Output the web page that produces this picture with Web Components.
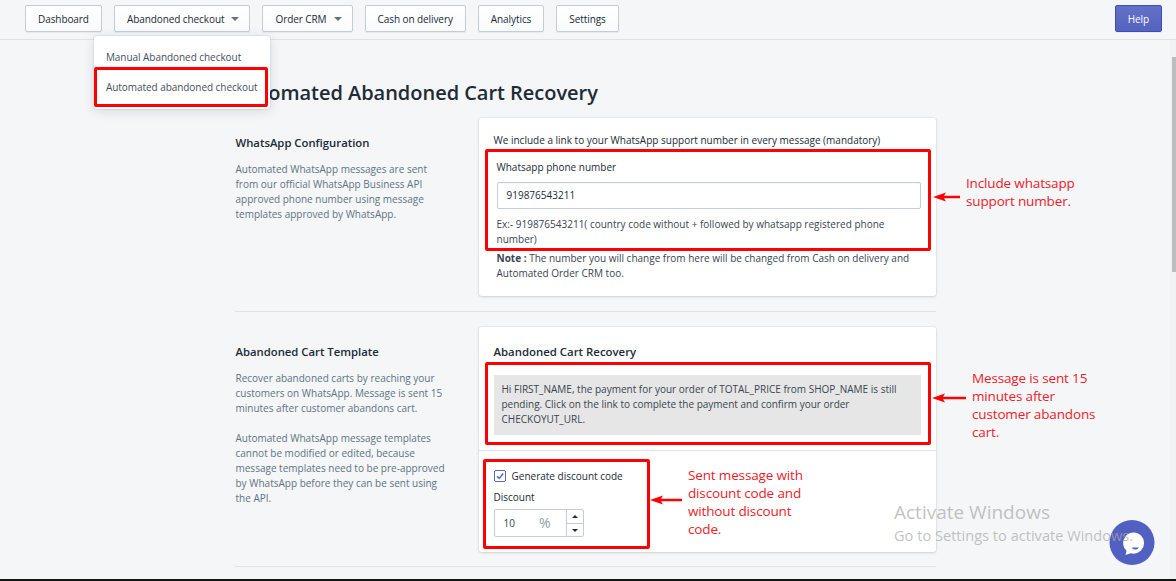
<!DOCTYPE html>
<html>
<head>
<meta charset="utf-8">
<title>Automated Abandoned Cart Recovery</title>
<style>
  html, body { margin: 0; padding: 0; height: 100%; overflow: hidden; }
  body { font-family: "Open Sans", "Noto Sans", sans-serif; font-size: 10px; letter-spacing: 0; color: #212b36; background: #f4f6f8; }
</style>
</head>
<body>
<app-page>
  <top-nav slot="nav">
    <nav-button>Dashboard</nav-button>
    <nav-button caret>Abandoned checkout
      <drop-menu slot="menu">
        <span>Manual Abandoned checkout</span>
        <span>Automated abandoned checkout</span>
      </drop-menu>
    </nav-button>
    <nav-button caret>Order CRM</nav-button>
    <nav-button>Cash on delivery</nav-button>
    <nav-button>Analytics</nav-button>
    <nav-button>Settings</nav-button>
    <nav-button slot="help" primary>Help</nav-button>
  </top-nav>

  <page-title>Automated Abandoned Cart Recovery</page-title>

  <settings-section heading="WhatsApp Configuration">
    <p slot="desc">Automated WhatsApp messages are sent from our official WhatsApp Business API approved phone number using message templates approved by WhatsApp.</p>
    <whatsapp-card></whatsapp-card>
  </settings-section>

  <settings-section heading="Abandoned Cart Template" second>
    <p slot="desc">Recover abandoned carts by reaching your customers on WhatsApp. Message is sent 15 minutes after customer abandons cart.</p>
    <p slot="desc">Automated WhatsApp message templates cannot be modified or edited, because message templates need to be pre-approved by WhatsApp before they can be sent using the API.</p>
    <template-card></template-card>
  </settings-section>

  <!-- annotations drawn on top of the screenshot -->
  <mark-box slot="over" style="left:94px;top:67px;width:174px;height:40px"></mark-box>
  <mark-box slot="over" style="left:485px;top:149px;width:446px;height:102px"></mark-box>
  <mark-box slot="over" style="left:485px;top:362px;width:446px;height:83px"></mark-box>
  <mark-box slot="over" style="left:483px;top:459px;width:167px;height:90px"></mark-box>

  <mark-arrow slot="over" style="left:933px;top:192px" length="27"></mark-arrow>
  <mark-arrow slot="over" style="left:932px;top:393px" length="34"></mark-arrow>
  <mark-arrow slot="over" style="left:650px;top:495px" length="32"></mark-arrow>

  <mark-note slot="over" style="left:966px;top:174px">Include whatsapp<br>support number.</mark-note>
  <mark-note slot="over" style="left:972px;top:369px">Message is sent 15<br>minutes after<br>customer abandons<br>cart.</mark-note>
  <mark-note slot="over" style="left:688px;top:466px">Sent message with<br>discount code and<br>without discount<br>code.</mark-note>

  <chat-launcher slot="over"></chat-launcher>
  <win-watermark slot="over"></win-watermark>
</app-page>

<script>
  class AppPage extends HTMLElement {
    constructor() {
      super();
      this.attachShadow({mode: "open"});
      this.shadowRoot.innerHTML = `
        <style>
          :host { display: flex; flex-direction: column; position: relative; width: 1176px; height: 581px; overflow: hidden; }
          .body { flex: 1; display: flex; min-height: 0; }
          .content { flex: 1; min-width: 0; overflow: hidden; }
          .inner { width: 701px; margin: 0 auto; }
          .track { width: 6px; background: #f1f2f4; position: relative; }
          .thumb { margin: 17px 0 0 2px; height: 215px; background: #bdbdbd; }
          .strip { height: 2px; background: #10130f; }
        </style>
        <slot name="nav"></slot>
        <div class="body">
          <div class="content"><div class="inner"><slot></slot></div></div>
          <div class="track"><div class="thumb"></div></div>
        </div>
        <div class="strip"></div>
        <slot name="over"></slot>
      `;
    }
  }

  class TopNav extends HTMLElement {
    constructor() {
      super();
      this.attachShadow({mode: "open"});
      this.shadowRoot.innerHTML = `
        <style>
          :host { display: flex; align-items: flex-start; gap: 12px; height: 39px; box-sizing: content-box; padding: 0 14px 0 25px; border-bottom: 1px solid #dfe3e8; background: #f4f6f8; }
          .end { margin-left: auto; }
          div { padding-top: 5px; display: flex; gap: 12px; }
        </style>
        <div><slot></slot></div>
        <div class="end"><slot name="help"></slot></div>
      `;
    }
  }

  class NavButton extends HTMLElement {
    constructor() {
      super();
      this.attachShadow({mode: "open"});
      this.shadowRoot.innerHTML = `
        <style>
          :host { display: block; position: relative; letter-spacing: -.08px; }
          .btn { display: flex; align-items: center; gap: 7px; height: 27px; box-sizing: border-box; padding: 0 12px; border: 1px solid #c4cdd5; border-radius: 2px; background: linear-gradient(#fff, #f9fafb); color: #212b36; white-space: nowrap; box-shadow: 0 1px 0 rgba(22,29,37,.05); }
          :host([caret]) .btn { padding-right: 10px; }
          :host([primary]) .btn { padding: 0 12px; border-color: #3f4eae; background: linear-gradient(#6371c7, #5563c1); color: #fff; }
          i { display: none; width: 0; height: 0; border: 4px solid transparent; border-top: 4px solid #637381; border-bottom: 0; }
          :host([caret]) i { display: block; }
        </style>
        <div class="btn"><slot></slot><i></i></div>
        <slot name="menu"></slot>
      `;
    }
  }

  class DropMenu extends HTMLElement {
    constructor() {
      super();
      this.attachShadow({mode: "open"});
      this.shadowRoot.innerHTML = `
        <style>
          :host { display: flex; flex-direction: column; position: absolute; z-index: 3; left: -20px; top: 31px; width: 176px; height: 73px; box-sizing: border-box; padding-top: 6px; background: #fff; border-radius: 3px; box-shadow: 0 0 0 1px rgba(6,44,82,.06), 0 2px 12px rgba(33,43,54,.14); color: #454f5b; letter-spacing: -.05px; }
          ::slotted(span) { display: block; height: 30px; line-height: 30px; padding-left: 12px; white-space: nowrap; }
        </style>
        <slot></slot>
      `;
    }
  }

  class PageTitle extends HTMLElement {
    constructor() {
      super();
      this.attachShadow({mode: "open"});
      this.shadowRoot.innerHTML = `
        <style>
          :host { display: block; padding-top: 38px; height: 40px; line-height: 30px; font-size: 20px; font-weight: 600; letter-spacing: -.03px; color: #212b36; white-space: nowrap; }
        </style>
        <slot></slot>
      `;
    }
  }

  // One settings row: title and description left, card right
  class SettingsSection extends HTMLElement {
    constructor() {
      super();
      this.attachShadow({mode: "open"});
      this.shadowRoot.innerHTML = `
        <style>
          :host { display: grid; grid-template-columns: 244px 457px; padding-bottom: 15px; border-bottom: 1px solid #dfe3e8; margin-bottom: 15px; }
          .side { width: 214px; padding: 16px 0 0 1px; }
          h2 { margin: 0 0 10px; font-size: 11.3px; line-height: 18px; font-weight: 600; color: #212b36; white-space: nowrap; }
          ::slotted(p) { margin: 0 0 15px; line-height: 15px; color: #637381; }
          :host([second]) { padding-bottom: 14px; }
        </style>
        <div class="side"><h2></h2><slot name="desc"></slot></div>
        <div><slot></slot></div>
      `;
      this.shadowRoot.querySelector("h2").textContent = this.getAttribute("heading");
    }
  }

  class WhatsappCard extends HTMLElement {
    constructor() {
      super();
      this.attachShadow({mode: "open"});
      this.shadowRoot.innerHTML = `
        <style>
          :host { display: block; height: 178px; box-sizing: border-box; padding: 15px 15px 0; background: #fff; border-radius: 3px; box-shadow: 0 0 0 1px rgba(63,63,68,.05), 0 1px 3px rgba(63,63,68,.15); }
          p { margin: 0; line-height: 15px; }
          .form { margin-left: 3px; }
          .label { margin-top: 12px; }
          .input { margin-top: 7px; height: 27px; box-sizing: border-box; width: 424px; line-height: 25px; padding-left: 9px; border: 1px solid #c4cdd5; border-radius: 2px; box-shadow: inset 0 1px 0 rgba(99,115,129,.05); }
          .hint { margin-top: 8px; color: #3a4550; }
          .note { margin-top: 4px; color: #3a4550; }
          b { font-weight: 700; }
        </style>
        <p>We include a link to your WhatsApp support number in every message (mandatory)</p>
        <div class="form">
          <p class="label">Whatsapp phone number</p>
          <div class="input">919876543211</div>
          <p class="hint">Ex:- 919876543211( country code without + followed by whatsapp registered phone number)</p>
          <p class="note"><b>Note :</b> The number you will change from here will be changed from Cash on delivery and Automated Order CRM too.</p>
        </div>
      `;
    }
  }

  class TemplateCard extends HTMLElement {
    constructor() {
      super();
      this.attachShadow({mode: "open"});
      this.shadowRoot.innerHTML = `
        <style>
          :host { display: block; height: 225px; background: #fff; border-radius: 3px; box-shadow: 0 0 0 1px rgba(63,63,68,.05), 0 1px 3px rgba(63,63,68,.15); }
          .top { height: 124px; box-sizing: border-box; padding: 16px 15px 0; border-bottom: 1px solid #dfe3e8; }
          h3 { margin: 0 0 14px; font-size: 11.4px; line-height: 18px; font-weight: 600; }
          .msg { width: 427px; height: 60px; box-sizing: border-box; padding: 7px 8px; line-height: 15px; background: #e6e6e6; color: #3a4550; }
          .bottom { padding: 18px 15px 0; }
          .check { display: flex; align-items: center; gap: 6px; line-height: 14px; }
          .box { width: 12px; height: 12px; box-sizing: border-box; border: 1px solid #5c6ac4; border-radius: 2px; display: block; }
          .lbl { margin-top: 7px; line-height: 15px; }
          .num { margin-top: 4px; width: 90px; height: 28px; box-sizing: border-box; display: flex; border: 1px solid #c4cdd5; border-radius: 2px; line-height: 26px; }
          .val { flex: 1; display: flex; padding-left: 9px; color: #3a4550; }
          .val em { margin-left: 24px; font-style: normal; font-size: 14px; color: #919eab; }
          .spin { width: 16px; display: grid; grid-template-rows: 1fr 1fr; border-left: 1px solid #c4cdd5; }
          .spin span { display: flex; align-items: center; justify-content: center; }
          .spin span + span { border-top: 1px solid #c4cdd5; }
          .spin i { width: 0; height: 0; border: 3px solid transparent; }
          .up { border-bottom: 3px solid #212b36 !important; border-top: 0 !important; }
          .down { border-top: 3px solid #212b36 !important; border-bottom: 0 !important; }
        </style>
        <div class="top">
          <h3>Abandoned Cart Recovery</h3>
          <div class="msg">Hi FIRST_NAME, the payment for your order of TOTAL_PRICE from SHOP_NAME is still pending. Click on the link to complete the payment and confirm your order CHECKOYUT_URL.</div>
        </div>
        <div class="bottom">
          <div class="check">
            <svg class="box" viewBox="0 0 10 10"><path d="M2 5.2 4.2 7.4 8.2 2.6" fill="none" stroke="#5c6ac4" stroke-width="1.5"/></svg>
            <span>Generate discount code</span>
          </div>
          <div class="lbl">Discount</div>
          <div class="num">
            <div class="val">10<em>%</em></div>
            <div class="spin"><span><i class="up"></i></span><span><i class="down"></i></span></div>
          </div>
        </div>
      `;
    }
  }

  class MarkBox extends HTMLElement {
    constructor() {
      super();
      this.attachShadow({mode: "open"});
      this.shadowRoot.innerHTML = `
        <style>
          :host { display: block; position: absolute; z-index: 5; box-sizing: border-box; border: 3px solid #f00; border-radius: 2px; }
        </style>
      `;
    }
  }

  class MarkArrow extends HTMLElement {
    constructor() {
      super();
      this.attachShadow({mode: "open"});
      const w = this.getAttribute("length");
      this.shadowRoot.innerHTML = `
        <style>
          :host { display: block; position: absolute; z-index: 5; line-height: 0; }
        </style>
        <svg width="${w}" height="10" viewBox="0 0 ${w} 10"><path d="M0 5 13 .5 11 3.8H${w}V6.2H11L13 9.5Z" fill="#f00"/></svg>
      `;
    }
  }

  class MarkNote extends HTMLElement {
    constructor() {
      super();
      this.attachShadow({mode: "open"});
      this.shadowRoot.innerHTML = `
        <style>
          :host { display: block; position: absolute; z-index: 5; font-size: 13.5px; line-height: 18px; letter-spacing: -.15px; color: #ec1c2a; white-space: nowrap; }
        </style>
        <slot></slot>
      `;
    }
  }

  class ChatLauncher extends HTMLElement {
    constructor() {
      super();
      this.attachShadow({mode: "open"});
      this.shadowRoot.innerHTML = `
        <style>
          :host { display: block; position: absolute; z-index: 6; left: 1109px; top: 520px; width: 46px; height: 46px; line-height: 0; }
        </style>
        <svg width="46" height="46" viewBox="0 0 46 46">
          <circle cx="23" cy="22.5" r="22.5" fill="#5160c1"/>
          <path d="M24.5 12.5a10.6 10.6 0 0 1 0 21.2c-1 0-2-.1-2.9-.4L16.5 35l1-4.2a10.6 10.6 0 0 1 7-18.3Z" fill="#fff"/>
          <path d="M22.8 27.6h7c-.7 1.4-2 2-3.5 2s-2.8-.6-3.5-2Z" fill="#5160c1"/>
        </svg>
      `;
    }
  }

  class WinWatermark extends HTMLElement {
    constructor() {
      super();
      this.attachShadow({mode: "open"});
      this.shadowRoot.innerHTML = `
        <style>
          :host { display: block; position: absolute; z-index: 7; left: 894px; top: 499px; color: rgba(170,170,170,.72); white-space: nowrap; pointer-events: none; }
          .a { font-size: 19px; line-height: 26px; }
          .b { font-size: 14.6px; line-height: 20px; }
        </style>
        <div class="a">Activate Windows</div>
        <div class="b">Go to Settings to activate Windows.</div>
      `;
    }
  }

  customElements.define("app-page", AppPage);
  customElements.define("top-nav", TopNav);
  customElements.define("nav-button", NavButton);
  customElements.define("drop-menu", DropMenu);
  customElements.define("page-title", PageTitle);
  customElements.define("settings-section", SettingsSection);
  customElements.define("whatsapp-card", WhatsappCard);
  customElements.define("template-card", TemplateCard);
  customElements.define("mark-box", MarkBox);
  customElements.define("mark-arrow", MarkArrow);
  customElements.define("mark-note", MarkNote);
  customElements.define("chat-launcher", ChatLauncher);
  customElements.define("win-watermark", WinWatermark);
</script>
</body>
</html>
